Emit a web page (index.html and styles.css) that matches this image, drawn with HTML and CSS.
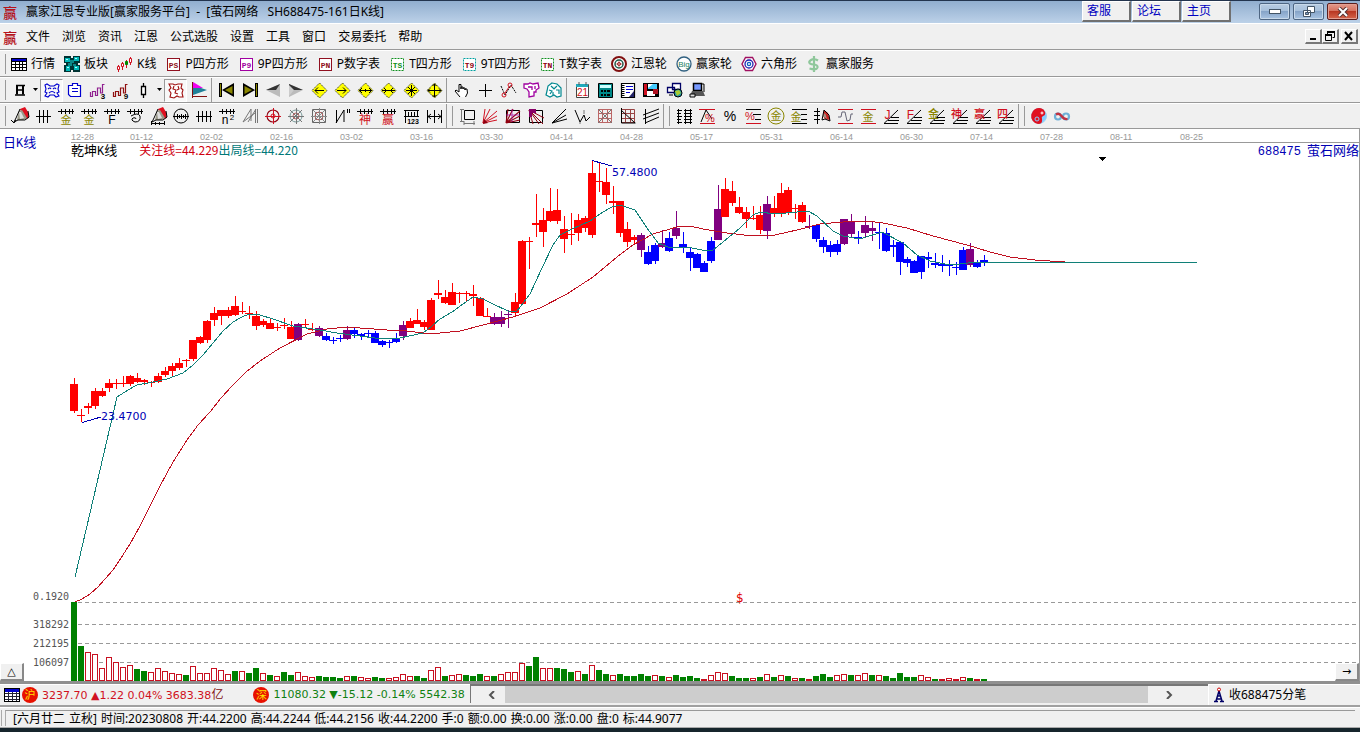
FILE: index.html
```html
<!DOCTYPE html>
<html lang="zh-CN">
<head>
<meta charset="utf-8">
<title>赢家江恩专业版</title>
<link rel="stylesheet" href="styles.css">
</head>
<body>
<div class="app">
  <header class="titlebar">
    <span class="logo">赢</span>
    <h1 class="title">赢家江恩专业版[赢家服务平台]&nbsp; - &nbsp;[萤石网络 &nbsp; SH688475-161日K线]</h1>
    <nav class="links"><button>客服</button><button>论坛</button><button>主页</button></nav>
    <div class="win">
      <button aria-label="最小化"><svg width="12" height="6"><rect x=".5" y=".5" width="11" height="4" fill="#fff" stroke="#456"/></svg></button>
      <button aria-label="还原"><svg width="12" height="12"><path d="M4.500.500h7v6h-7z M.500 4.500h7v6h-7z" fill="#fff" stroke="#456"/><path d="M2.500 6.500h3v2h-3z" fill="#7f9cc0" stroke="#456"/></svg></button>
      <button class="close" aria-label="关闭"><svg width="12" height="10"><path d="M2 1l8 8M10 1l-8 8" stroke="#533" stroke-width="4"/><path d="M2 1l8 8M10 1l-8 8" stroke="#fff" stroke-width="2"/></svg></button>
    </div>
  </header>
  <div class="menubar">
    <span class="logo">赢</span>
    <nav class="menu"><button>文件</button><button>浏览</button><button>资讯</button><button>江恩</button><button>公式选股</button><button>设置</button><button>工具</button><button>窗口</button><button>交易委托</button><button>帮助</button></nav>
    <div class="mdi">
      <button aria-label="最小化窗口"><svg width="12" height="10"><path d="M3 8h6" stroke="#000" stroke-width="2"/></svg></button>
      <button aria-label="还原窗口"><svg width="12" height="10"><path d="M3 1h8M1 4h7" stroke="#000" stroke-width="2"/><path d="M3.500 1v3M10.500 1v5.500h-2M1.500 4v5.500h6v-5.500" stroke="#000" fill="none"/></svg></button>
      <button class="apart" aria-label="关闭窗口"><svg width="12" height="10"><path d="M2 1l7 8M9 1l-7 8" stroke="#000" stroke-width="2"/></svg></button>
    </div>
  </div>
  <div class="toolbar" id="bar1"></div>
  <div class="toolbar" id="bar2"></div>
  <div class="toolbar" id="bar3"></div>
  <main class="chart">
    <svg class="plot" id="plot" role="img" aria-label="日K线"></svg>
    <span class="period">日<i>K</i>线</span>
    <div class="legend"><span>乾坤<i>K</i>线</span><span class="focus">关注线=44.229</span><span class="exit">出局线=44.220</span></div>
    <div class="stock"><i>688475</i><span>萤石网络</span></div>
    <button class="corner left">△</button>
    <button class="corner right">→</button>
  </main>
  <div class="ticker">
    <div class="quotes">
      <svg class="sheet" width="16" height="14"><rect x=".5" y=".5" width="15" height="13" fill="#fff" stroke="#000"/><path d="M1 2.500h14" stroke="#00c" stroke-width="3"/><path d="M1 5.500h14M1 8.500h14M1 11.500h14M4.500 4v9M8.500 4v9M12.500 4v9" stroke="#223"/></svg>
      <span class="badge">沪</span><span class="up">3237.70 ▲1.22 0.04% 3683.38<span class="unit">亿</span></span>
      <span class="badge second">深</span><span class="down">11080.32 ▼-15.12 -0.14% 5542.38</span>
    </div>
    <div class="scroll">
      <button class="prev" aria-label="向左"><svg width="8" height="8"><path d="M6 0L2 4l4 4" /></svg></button>
      <div class="thumb"></div>
      <button class="next" aria-label="向右"><svg width="8" height="8"><path d="M2 0l4 4-4 4" /></svg></button>
    </div>
    <div class="feed">
      <svg width="12" height="16"><path d="M6 4L3 14M6 4l3 10M4 9h4M4 12h4M1 14.500h4M7 14.500h4" stroke="#006" stroke-width="1.500" fill="none"/><circle cx="6" cy="2.500" r="1.500" fill="#fff" stroke="#c00"/></svg>
      <span>收688475分笔</span>
    </div>
  </div>
  <footer class="status"><div class="statusline"><span>[六月廿二</span><span>立秋]</span><span>时间:20230808</span><span>开:44.2200</span><span>高:44.2244</span><span>低:44.2156</span><span>收:44.2200</span><span>手:0</span><span>额:0.00</span><span>换:0.00</span><span>涨:0.00</span><span>盘:0</span><span>标:44.9077</span></div></footer>
  <div class="desk"></div>
</div>
<script src="app.js"></script>
</body>
</html>
```
FILE: styles.css
```css
* { box-sizing: border-box; }
body { margin: 0; font: 12px/16px "Noto Sans", "Noto Sans CJK SC", sans-serif; color: #000; background: #f0f0f0; }
button { font: inherit; color: inherit; background: none; border: 0; padding: 0; margin: 0; }
i { font-style: normal; }
svg { display: block; flex: none; }
.app { display: flex; flex-direction: column; height: 100vh; overflow: hidden; white-space: nowrap; }

.titlebar { display: flex; align-items: center; height: 23px; flex: none; padding: 0 2px 0 3px; border-top: 1px solid #23344e; background: linear-gradient(#91aecf, #bcd1e8); }
.logo { width: 16px; margin-right: 7px; font: 500 14px/18px "Noto Sans CJK SC", sans-serif; color: #b5121b; }
.title { margin: 0; font-size: 12px; font-weight: 400; flex: 1; }
.links { display: flex; gap: 1px; margin-right: 28px; align-self: flex-start; }
.links button { width: 49px; height: 21px; padding-left: 4px; text-align: left; color: #0000c0; background: #f0f0f0; border: 1px solid #fff; border-right: 2px solid #707070; border-bottom: 2px solid #707070; }
.win { display: flex; gap: 3px; align-self: flex-start; margin-top: 2px; }
.win button { width: 31px; height: 17px; display: grid; place-items: center; border: 1px solid #4e6683; border-radius: 2px; background: linear-gradient(#b8cce2, #a6bfdb 48%, #86a4c8 50%, #a9c4e2); box-shadow: inset 0 0 0 1px #c8d9ea; }
.win .close { background: linear-gradient(#e39a8c, #d5705d 48%, #b93823 50%, #d6664c); border-color: #5c1f1d; box-shadow: inset 0 0 0 1px #e3a093; }

.menubar { display: flex; align-items: center; height: 27px; flex: none; padding: 0 2px 0 3px; border-bottom: 1px solid #999; border-top: 1px solid #fff; }
.menu { display: flex; gap: 12px; flex: 1; }
.mdi { display: flex; }
.mdi button { width: 17px; height: 15px; display: grid; place-items: center; border: 1px solid #fff; border-right: 2px solid #777; border-bottom: 2px solid #777; }
.mdi .apart { margin-left: 2px; }

.toolbar { display: flex; flex: none; height: 26px; border-top: 1px solid #fff; border-bottom: 1px solid #999; }
#bar1 { height: 27px; }
.group { display: flex; align-items: center; padding-right: 1px; border-right: 1px solid #999; }
.group:last-child { border-right: 0; }
.grip { width: 1px; margin: 0 2px 0 5px; height: 20px; background: #999; }
.named { display: flex; align-items: center; gap: 4px; padding: 0 6px 0 3px; }
.tool { width: 23px; height: 23px; display: grid; place-items: center; }
.tool.on { border: 1px solid #999; border-right-color: #fff; border-bottom-color: #fff; background: #f8f8f8; }
.more { width: 9px; height: 20px; display: grid; place-items: center; }
.sep { width: 1px; height: 24px; margin: 0 3px 0 1px; background: #999; }

.chart { position: relative; flex: 1; min-height: 0; background: #fff; border-right: 1px solid #999; }
.plot { width: 100%; height: 100%; }
.plot text { white-space: pre; }
.date { font: 9px "Liberation Sans", sans-serif; fill: #999; }
.scale { font: 10px "DejaVu Sans Mono", monospace; fill: #555; }
.price { font: 11px "DejaVu Sans", sans-serif; fill: #0000b4; }
.dividend { font: 12px "DejaVu Sans", sans-serif; fill: #e00000; }
.period, .stock, .legend { position: absolute; font: 13px/16px "Noto Sans CJK SC", sans-serif; color: #0000b4; }
.period i, .stock i, .legend i { font: 12px "Liberation Mono", monospace; }
.period { left: 3px; top: 5px; }
.stock { right: 0; top: 13px; display: flex; gap: 6px; align-items: baseline; }
.legend { left: 71px; top: 13px; display: flex; color: #000; }
.focus, .exit { font-size: 12px; }
.focus { color: #d00010; margin-left: 22px; }
.exit { color: #007878; }
.corner { position: absolute; bottom: 0; width: 24px; height: 18px; background: #f0f0f0; border: 1px solid #fff; border-right: 2px solid #888; border-bottom: 2px solid #888; font: 11px/12px "DejaVu Sans", sans-serif; }
.corner.left { left: 0; }
.corner.right { right: 0; }

.ticker { display: flex; flex: none; height: 26px; border-top: 3px solid #909090; border-bottom: 2px solid #a0a0a0; font: 11px/18px "DejaVu Sans", "Noto Sans CJK SC", sans-serif; }
.quotes { flex: 0 0 470px; display: flex; align-items: center; overflow: hidden; padding-left: 4px; border-top: 1px solid #fff; }
.badge { flex: none; width: 16px; height: 16px; margin: 0 4px 0 2px; border-radius: 50%; background: #e81000; color: #ffe000; font: 11px/15px "Noto Sans CJK SC", sans-serif; text-align: center; }
.badge.second { margin-left: 24px; }
.up { color: #d01020; }
.unit { font-size: 12px; color: #801010; margin-right: 6px; }
.down { color: #108010; }
.scroll { flex: 1; display: flex; align-items: stretch; margin-bottom: 2px; border-top: 2px solid #777; border-left: 1px solid #777; }
.scroll button { display: flex; align-items: center; }
.scroll path { stroke: #555; stroke-width: 2; fill: none; }
.prev { width: 34px; padding-left: 17px; }
.next { width: 60px; padding-left: 17px; }
.thumb { flex: 1; background: #cdcdcd; }
.feed { flex: 0 0 152px; display: flex; align-items: center; gap: 4px; padding-left: 4px; border-left: 1px solid #fff; border-top: 1px solid #fff; font: 12px/18px "Noto Sans", "Noto Sans CJK SC", sans-serif; }
.status { flex: none; height: 21px; padding: 2px 5px 1px 5px; border-top: 1px solid #fff; border-bottom: 1px solid #aaa; }
.statusline { display: flex; gap: 4px; border-left: 1px solid #aaa; border-top: 1px solid #999; padding-left: 7px; line-height: 15px; box-shadow: -3px 0 0 #f0f0f0, -4px 0 0 #aaa; }
.desk { flex: none; height: 4px; background: #16252c; }
```
FILE: app.js
```js
const p = (d, stroke = '#000', fill = 'none', w = 1) => `<path d="${d}" stroke="${stroke}" fill="${fill}" stroke-width="${w}"/>`;
const f = (d, fill = '#000') => `<path d="${d}" fill="${fill}"/>`;
const c = (x, y, r, stroke = '#000', fill = 'none', w = 1) => `<circle cx="${x}" cy="${y}" r="${r}" stroke="${stroke}" fill="${fill}" stroke-width="${w}"/>`;
const t = (x, y, s, size, fill, weight = 400, face = 'Liberation Sans') => `<text x="${x}" y="${y}" font-size="${size}" fill="${fill}" font-weight="${weight}" text-anchor="middle" font-family="'${face}','Noto Sans CJK SC',sans-serif">${s}</text>`;
const svg = (body, size = 20) => `<svg width="${size}" height="${size}" viewBox="0 0 ${size} ${size}">${body}</svg>`;

const R = '#d01020', RD = '#900010', G = '#777', O = '#8a8600', B = '#0000d0', T = '#008890', M = '#a000a0';
const boxed = (s, color, dash = '', ink = color) => svg(`<rect x="2.500" y="2.500" width="12" height="12" fill="#fff" stroke="${color}" stroke-dasharray="${dash}"/>` + t(8.5, 11.5, s, 8, ink, 700, 'Liberation Mono'), 16);

const named = [
  ['行情', svg(f('M0 2h16v13H0z') + f('M1 3h14v2H1z', B) + f('M1 6h3v2H1zM5 6h3v2H5zM9 6h2v2H9zM12 6h3v2h-3zM1 9h3v2H1zM5 9h3v2H5zM9 9h2v2H9zM12 9h3v2h-3zM1 12h3v2H1zM5 12h3v2H5zM9 12h2v2H9zM12 12h3v2h-3z', '#fff'), 16)],
  ['板块', svg(f('M0 0h7v2h2V0h7v7h-2v2h2v7H9v-2H7v2H0V9h2V7H0z', '#033') + f('M1 2h5v4H1zM10 1h5v4h-5zM2 10h4v5H2zM10 10h5v4h-5z', '#00b8b8') + f('M6 4h4v3H6zM4 7h4v3H4zM9 8h3v2H9z', '#0a8888') + f('M2 3h2v1H2zM11 2h2v1h-2zM3 11h2v1H3zM11 11h2v1h-2z', '#aff'), 16)],
  ['K线', svg(p('M1.500 9v7M5.500 6v8M9.500 4v8M13.500 1v8', R) + p('M.5 10.500h2v3h-2zM4.500 7.500h2v3h-2zM12.500 2.500h2v4h-2z', R, '#fff') + p('M8.500 5.500h2v3h-2z', '#080', '#080'), 16)],
  ['P四方形', boxed('PS', '#901020')], ['9P四方形', boxed('P9', M)], ['P数字表', boxed('PN', '#901020')],
  ['T四方形', boxed('TS', '#109020', '2 1')], ['9T四方形', boxed('T9', '#00a0a0', '2 1', '#900010')], ['T数字表', boxed('TN', '#109020', '2 1', '#900010')],
  ['江恩轮', svg(c(8, 8, 7, '#801010', '#fff', 2) + c(8, 8, 4, '#186050', '#fff', 1.5) + c(8, 8, 1.5, '#a02020') + p('M8 4v8M4 8h8', '#a02020', 'none', .5), 16)],
  ['赢家轮', svg(c(8, 8, 7, '#306080', '#fff', 1.3) + t(8, 11, 'Big', 8, '#188060'), 16)],
  ['六角形', svg(p('M4.500 1.500h7L15 8l-3.500 6.500h-7L1 8z', '#a01060', '#fff', 1.4) + c(8, 8, 4, '#2020b0', 'none', 1.3) + c(8, 8, 1.6, '#1060c0', 'none', 1.3), 16)],
  ['赢家服务', svg(p('M12 4.500Q8 2 5 4t-1 3.500Q5 8.500 8 8.500q4 .500 3.500 3-1 3-8 1M8 0v16', '#8fc79b', 'none', 2.2), 16)]
];

const arrows = {
  left: 'M6 10.500h9M9 7.500l-3 3 3 3', right: 'M5 10.500h9M11 7.500l3 3-3 3', both: 'M4 10.500h13M7 8l-2.500 2.500L7 13M14 8l2.500 2.500L14 13M10.500 9v3',
  inward: 'M4 10.500h13M6 8l2.500 2.500L6 13M15 8l-2.500 2.500L15 13', star: 'M5 10.500h11M10.500 5v11M7 7l7 7M14 7l-7 7', cross: 'M4 10.500h13M10.500 4v13M8.500 6l2-2 2 2M8.500 15l2 2 2-2M6 8.500l-2 2 2 2M15 8.500l2 2-2 2'
};
const diamond = k => svg(f('M10.500 3l7.500 7.500-7.500 7.500L3 10.500z', '#ffff00') + '<path d="M10.500 3l7.500 7.500-7.500 7.500L3 10.500z" fill="none" stroke="#333" stroke-dasharray="1.500 1"/>' + p(arrows[k], '#000', 'none', 1));
const wave = (n, col) => svg(p('M2.500 12v4.500h2v-5h3v4h2V8h3v5h2V4.500h2', col, 'none', 1.2) + t(15, 19, n, 8, '#000', 700));

const bar2 = [
  ['日线', svg(p('M6 5.500h9M6 10h8', '#000', 'none', 1.5) + p('M7 5v9.500M13 5v9.500', '#000', 'none', 2) + p('M5 15h10', '#000', 'none', 1.5)), 'more'],
  ['云图', svg(p('M3 5l2-1 3 2h4l3-2 2 1-1 4 1 3-2 1 2 3-3 1-2-2H8l-2 2-3-1 2-3-2-1 1-3zM6 9q2-2 3 0M11 9q2-2 3 0M7 13q3-3 6 0', B, 'none', 1.1)), 'on'],
  ['剪贴板', svg(p('M7.500 3.500h5v2h3v11h-10l-2-2v-9h4zM7 8.500h6M7 11.500h6', B, '#fff', 1.2))],
  ['三波', wave('3', '#902090')], ['九波', wave('9', '#901010')],
  ['K线样式', svg(p('M7.500 6.500h4v8h-4zM9.500 3v3M9.500 15v3', '#000', '#fff', 1.3)), 'more'],
  ['形态', svg(p('M3 4h4l2 1 3-1h4l-1 4 2 2-1 3 1 4h-4l-2-1-3 2-4-1 1-4-2-3 2-2zM8 6l-1 3 3 1-1 3 3 1M12 6l1 3-2 1', '#a01010', '#fff', 1.1)), 'on'],
  ['旗', svg(p('M3.500 2v16M3 16.500h15', '#801010') + f('M4 2l10 6H4z', '#f000f0') + f('M4 8h8l6 2-14 5z', '#208098')), 'sep'],
  ['首', svg(f('M2 3h3v14H2zM17 3v14L5 10z') + f('M15.500 6v8L8 10z', '#8a8600') + f('M3 4h1v12H3z', '#8a8600'))],
  ['末', svg(f('M15 3h3v14h-3zM3 3v14l12-7z') + f('M4.500 6v8L12 10z', '#8a8600') + f('M16 4h1v12h-1z', '#8a8600'))],
  ['左', svg(f('M17 4v13L3 10z', '#bbb') + f('M17 4L3 10h10z', '#333'))],
  ['右', svg(f('M3 4v13l14-7z', '#bbb') + f('M3 4l14 6-14 0z', '#333') + f('M3 5l5 5-5 6z', '#ccc'))],
  ...Object.keys(arrows).map(k => [k, diamond(k)]),
  ['sep'],
  ['手形', svg(p('M8 17l-5-6 1-1 3 2V4.500h2V9V7h2v2-1h2v2-1h2l.500 4-2 4', '#000', '#fff'))],
  ['十字', svg(p('M10.500 4v13M4 10.500h13'))],
  ['节点', svg('<path d="M3 6l4 9L13 5l5 8" fill="none" stroke="#000" stroke-dasharray="2 1"/>' + c(6, 15, 2, R) + c(12, 5, 2, R) + p('M7 13l4-6', R))],
  ['脑图', svg(p('M3 4h4l2-1 3 1 5-1 1 5-3 2v2h-2v4l-5 1v-5l-2-3-3-1zM7 7h4v3M14 6v3', M, '#fff', 1.3))],
  ['云', svg(p('M8 3l5 1 4 4v8l-4 1-3-2-4 2-4-2 1-4 1-5zM7 6l3 3 3-3M5 10l3 1-2 3M12 10h3v4M9 12v4', T, '#fff', 1.2))],
  ['sep'],
  ['日历', svg(p('M4.500 4.500h12v13h-12z', '#444', '#fff') + f('M4 4h12v3H4z', '#2ab') + p('M7 2v3M14 2v3', '#555') + t(10.5, 16, '21', 10, R))],
  ['计算器', svg(p('M3.500 3.500h14v14h-14z', '#000', '#088', 1) + f('M5 5h11v3H5z', '#cff') + f('M6 10h2v2H6zM9 10h2v2H9zM12 10h3v2h-3zM6 14h2v2H6zM9 14h2v2H9zM12 14h3v2h-3z'))],
  ['笔记', svg(p('M3.500 3.500h13v14h-13z', '#000', '#fff', 1.2) + '<path d="M5 3v15" stroke="#000" stroke-width="3" stroke-dasharray="1 1"/>' + p('M8 6.500h7M8 9.500h7M8 12.500h4', B) + f('M16 11v6h-5z', '#226'))],
  ['保存', svg(f('M2 3h16v14H2z') + f('M3 4h3v11H3z', R) + f('M7 4h9v5H7z', '#4cf') + f('M7 4h5L7 8z', '#fff') + f('M6 11h8v5H6z', '#fff') + f('M12 9h5v5h-5z', '#b01020'))],
  ['联网', svg(p('M3.500 7.500h7v5h-7zM8.500 3.500h8v6h-8z', '#006', '#fff', 1.3) + c(14, 13, 4, '#000', '#29a') + f('M11 11l4-1 2 3-4 3z', '#ac3') + p('M5 15h4', '#000'))],
  ['电脑', svg(p('M6.500 3.500h8v7h-8z', '#000', '#79f', 1.5) + f('M5 11h11l2 5H3z', '#555') + p('M3 14h5v3H3zM15 4h2v8', '#000', '#ddd'))]
];

const comb = 'M2 5.500h16M5.500 3v5M9.500 3v5M13.500 3v5M16.500 3v5';
const combText = (s, col, size = 11) => svg(p(comb) + t(10, 18, s, size, col, 400));
const fan = (s, col) => svg(p('M3 17.500h14M7 14.500h11M10 11.500h8M3 17.500L17 4') + t(6.5, s > 'Z' ? 12 : 13, s, s > 'Z' ? 11 : 12, col, 500));
const rays = 'M3 17L5 3M3 17L10 3M3 17L17 5M3 17l14-7M3 17l14-3';
const pen = f('M10 3l5-2 3 5 1 6-5 1z', '#e01020') + f('M9 5l3-1 5 8-4 2-6 0z', '#998') + f('M9 6l2 0 3 6-4 1z', '#ddd') + p('M10 3L6 12l-2 4 4-2 7 0 4-3-1-6');
const grid = 'M3.500 3.500h13v13h-13zM7.500 3v14M12.500 3v14M3 7.500h14M3 12.500h14';

const bar3 = [[
  ['画笔', svg(pen + p('M1 14l3 3 2-3'))], ['分割', svg(p('M3 10.500h15M6.500 4v13M10.500 4v13M14.500 4v13'))],
  ['金一', combText('金', O)], ['金二', combText('金', O)], ['斐波', combText('F', '#000', 12)],
  ['螺旋', svg(p(comb) + p('M6 10q7-4 9 0 1 6-5 6-5-2-2-4 3-1 3 1'))],
  ['标尺笔', svg(pen + p('M3 17.500h14M3.500 15v4M7.500 16v3M11.500 16v3M16.500 15v4'))],
  ['圆尺', svg(c(10, 10, 7) + p('M2 10.500h16M6.500 8v5M8.500 9v3M10.500 8v5M12.500 9v3M14.500 8v5'))],
  ['等分', svg(p('M2 10.500h16M4.500 5v11M8.500 5v11M12.500 5v11M16.500 5v11'))],
  ['平方', svg(p(comb) + t(8, 18, 'n', 12, '#000') + t(15, 14, '2', 8, '#000'))],
  ['角线', svg(p('M3 16L11 3v12M3 16l12-9M15.500 3v14M17.500 3v14M8 16l8-13', G))],
  ['靶心', svg(c(10, 10, 6, RD, 'none', 1.1) + c(10, 10, 2, R) + p('M10.500 2v16M2 10.500h16', R))],
  ['辐射', svg(c(10, 10, 6, '#799') + c(10, 10, 3, '#b66') + p('M10.500 2v16M2 10.500h16M4 4l12 12M16 4L4 16', '#777'))],
  ['方格', svg(p('M3.500 3.500h13v13h-13zM6.500 6.500h7v7h-7z', '#666') + c(10, 10, 4, '#b66') + p('M10.500 2v16M2 10.500h16M3 3l14 14M17 3L3 17', '#888'))],
  ['折线', svg(p('M4.500 4v13M4 17L12 4v12M15.500 3v4M17.500 3v4'))],
  ['神', combText('神', R, 12)], ['赢', combText('赢', R, 12)],
  ['尺度', svg(p('M3 4.500h15M3 10.500h15M4.500 4v13M7.500 6v5M10.500 6v5M13.500 6v5M16.500 4v7') + t(12, 18, '123', 7, '#000', 700))],
  ['区间', svg(p('M3.500 4v13M17.500 4v13M10.500 4v13M4 10.500h13M7 8l-3 2.500L7 13M14 8l3 2.500-3 2.500'))]
], [
  ['矩形', svg(p('M7.500 4.500h10v9h-10z') + p('M3 3.500h4M3 15.500h4M4.500 3v13M7 17.500h11M7 15v4M17 15v4', G))],
  ['射线', svg(p(rays, R) + f('M3 18l1-5 4 4z', RD))],
  ['方扇', svg(p('M3.500 4.500h13v12h-13z') + p(rays, RD, 'none', 1.1) + p('M9 3v13M3 9h14', M, 'none', .7))],
  ['反扇', svg(p('M3.500 4.500h13v12h-13z') + p('M3 4l4 14M3 4l14 14M3 4l15 8M3 4l10 14', RD, 'none', 1) + f('M3 3h7v4H6v4H3z', '#806'))],
  ['速度线', svg(p('M3 17L17 3M3 17l14-8M3 17l15-4'))],
  ['波浪', svg(p('M3 4l5 12 4-7 2 6 4-4') + p('M12 4v4M8 16v2', G))],
  ['格栅', svg(p(grid, '#b66') + p('M3 3l14 14M17 3L3 17', G))],
  ['格栅二', svg(p(grid, '#944') + p('M3.500 2v15h14M3 4l14 13', '#000'))],
  ['平行线', svg(p('M4.500 3v15M2 9l16-6M2 13l16-6M4 17l14-6'))]
], [
  ['刻度', svg(p('M4.500 3v15M11.500 3v15M16.500 3v15') + p('M3 4.500h5M3 7.500h4M3 10.500h5M3 13.500h4M3 16.500h5M10 4.500h8M10 7.500h8M10 10.500h8M10 13.500h8M10 16.500h8'))],
  ['百分一', svg(p('M2 3.500h16M3 17.500h15', R) + p('M4 16L9 4l6 9') + t(13, 16, '%', 11, R))],
  ['百分', svg(t(10, 15, '%', 14, '#000'))],
  ['百分线', svg(p('M3 3.500h15M10 8.500h8M12 13.500h6') + p('M3 17.500h15', R) + t(7, 14, '%', 11, R))],
  ['金圆', svg(c(10, 10, 8, O) + t(10, 14, '金', 11, O))],
  ['金线', svg(p('M3 3.500h15M12 8.500h6M12 13.500h6M3 17.500h15') + t(7, 15, '金', 11, O))],
  ['标笔', svg(p('M5.500 2v16M2 5.500h6M2 9.500h6M2 13.500h6') + f('M12 4l4 3 2 7-5-1-2-3z', '#c22') + f('M11 10l2-3 2 6z', '#998') + p('M12 4l-2 10 3-1 5 2-1-6z'))],
  ['波带', svg(p('M3 3.500h15M3 17.500h15', R) + p('M3 11h3l1-5 3 0 2 9 3-1 1-6h2', '#667'))],
  ['金带', svg(p('M3 3.500h15M3 17.500h15', R) + t(10, 15, '金', 11, O))],
  ['J', fan('J', R)], ['F', fan('F', R)], ['金', fan('金', O)], ['神', fan('神', R)], ['赢', fan('赢', R)], ['四', fan('四', R)]
], [
  ['太极', svg(c(10, 10, 7.5, '#9cd4f4', '#8cf') + f('M12 2.300A8 8 0 1 0 9 18q5 0 4-5-1-2 1-3 3-1 2-4-1-3-4-3.700z', '#e01020') + c(8, 13, 2, '#8cf') + c(13, 7, 1, '#fff', '#e01020'))],
  ['无限', svg(c(6, 10.5, 3, '#6fb0d8', 'none', 2.2) + c(14, 10.5, 3, '#6fb0d8', 'none', 2.2) + p('M4 8.500q3-2 5.500 1.500t6 3', '#c23040', 'none', 2.2))]
]];

const more = '<button class="more" aria-label="展开"><svg width="6" height="4"><path d="M0 0h5L2.500 3z"/></svg></button>';
const tool = ([label, icon, extra]) => label === 'sep' ? '<span class="sep"></span>'
  : `<button class="tool${extra === 'on' ? ' on' : ''}" aria-label="${label}">${icon}</button>` + (extra === 'more' ? more : extra === 'sep' ? '<span class="sep"></span>' : '');
const group = html => `<div class="group"><span class="grip"></span>${html}</div>`;
document.getElementById('bar1').innerHTML = group(named.map(([s, i]) => `<button class="named">${i}<span>${s}</span></button>`).join(''));
document.getElementById('bar2').innerHTML = group(bar2.map(tool).join(''));
document.getElementById('bar3').innerHTML = bar3.map(g => group(g.map(tool).join(''))).join('');

// One candle per trading day: colour, high, body top, body bottom, low
const candles = `R378,384,411,413 R409,415,416,422 R403,406,408,414 R388,391,406,409 R388,391,396,397 R379,383,388,392 R379,383,384,389 R376,383,384,387
R375,376,384,386 R373,378,382,383 R379,380,382,385 R381,382,383,387 R373,376,382,383 R367,371,375,377 R363,366,371,376 R358,363,368,370
R359,360,361,367 R340,340,359,361 R336,337,343,344 R320,321,340,343 R307,313,320,326 R310,310,316,325 R307,310,316,318 R296,306,315,316
R302,311,312,314 R306,313,314,319 R311,316,326,330 R319,321,325,327 R318,323,329,329 R323,327,328,331 R318,325,326,329 R321,327,339,339
P323,324,340,341 R319,324,325,327 R323,329,330,331 P326,328,336,337 B333,336,340,341 B337,340,341,344 B335,338,339,342 P326,330,339,340
B328,330,334,338 B333,334,336,340 B330,333,334,338 B331,333,343,343 B340,341,345,347 B340,342,343,348 B333,338,342,343 P321,325,336,340
R318,321,328,328 R309,320,324,324 R320,322,327,330 R298,300,330,330 R280,293,295,299 R290,297,303,304 R283,292,305,305 R292,293,294,303
R291,293,294,302 R285,294,296,306 R297,298,316,316 R308,316,317,317 P313,317,324,325 P311,317,324,327 P310,314,315,328 R293,302,313,316
R240,241,304,305 R237,241,242,269 R194,223,225,237 R208,220,232,247 R188,211,221,222 R189,210,221,224 R216,229,239,253 R213,234,235,245
R214,220,233,241 R216,218,228,232 R160,173,235,238 R162,181,182,192 R168,182,195,204 R186,201,203,214 R201,201,233,237 R222,229,242,247
R235,237,240,244 P233,235,250,257 B246,252,264,265 B243,245,261,264 P230,243,247,248 B232,238,251,252 P211,228,236,239 B232,244,248,253
B248,252,258,271 B253,254,268,268 B261,263,272,272 B237,241,261,263 P185,209,240,240 R178,189,217,217 R181,191,203,206 R197,207,213,214
R207,212,219,228 R206,218,219,220 R206,215,230,234 P196,204,231,239 R196,208,213,217 R183,193,214,217 R187,190,213,215 R204,208,209,219
R202,205,222,223 P215,226,227,229 B225,225,239,242 B237,240,247,253 B241,245,252,257 B240,244,252,255 P219,219,244,245 P214,222,234,238
B231,237,239,244 P216,225,233,238 P221,228,231,241 B223,232,233,249 B228,233,251,252 B240,245,247,257 B241,242,262,275 B257,259,263,267
B260,261,273,273 B256,256,272,279 B252,257,259,268 B253,263,265,268 B255,264,266,272 B260,265,266,276 B262,267,268,275 B247,250,270,270
P243,249,265,267 B260,263,267,268 B255,260,262,266`.split(/\s+/);

// Volume bars: g filled, r hollow, followed by the bar height
const volumes = `g79 g35 r29 r27 r13 r24 r19 r14 r16 g12 g10 r9 r13 r10 r8 r7 g6 r15 r8 r8 r13 r11 r7 g10 r10 g8 g13 r8 g6 r5 g9 g6 r9 r5 r4 g5 g4 g4 g3 r5 g5 r4 r3 g4 g3
r3 r4 r7 r5 g5 g3 r11 r14 g5 r6 r7 g6 g5 g7 r5 g5 r7 r9 r9 r18 g15 g24 r13 r13 g13 g12 g9 r10 g7 r16 g11 g7 r6 g7 g5 g5 g7 g5 r6 g5 r4 g6 g4 g5 g3
r2 r6 r9 r8 g5 g3 g3 r3 g4 r7 g4 r6 g5 r3 g3 r2 g5 g7 g4 r6 r7 g6 r6 r8 g6 r6 g5 g3 g8 g4 g4 r6 r4 g2 r2 r3 r2 r4 g3 r2 g2`.split(/\s+/);

const exitLine = '75,577 90,513 117,397 128,390 137,385 153,382 167,379 183,373 193,365 203,355 213,343 223,331 233,322 242,317 249,314 260,315 273,319 293,326 320,330 337,333 360,336 375,338 400,338 423,333 432,326 440,319 452,312 463,304 473,297 483,299 493,304 508,311 517,311 530,294 542,268 553,245 560,235 572,229 590,221 603,212 612,207 620,205 635,210 647,228 658,243 668,247 687,247 707,251 713,250 723,242 740,228 753,215 760,212 775,214 808,211 817,216 833,231 843,236 860,239 882,232 903,243 917,255 930,261 945,264 960,264 977,262 1197,262';
const focusLine = '75,602 82,599 90,594 98,587 105,579 113,570 121,558 130,544 140,526 150,506 160,486 173,462 187,440 198,425 210,412 221,398 233,385 246,372 260,361 280,348 307,334 327,329 347,327 360,328 387,330 407,331 423,333 440,333 460,331 483,325 513,317 540,308 567,294 593,277 617,257 633,245 653,234 677,227 690,226 703,229 727,233 753,236 775,235 797,230 820,224 843,222 867,221 883,223 907,228 933,236 967,245 990,252 1010,257 1035,260 1065,262';
const dates = ['12-28', '01-12', '02-02', '02-16', '03-02', '03-16', '03-30', '04-14', '04-28', '05-17', '05-31', '06-14', '06-30', '07-14', '07-28', '08-11', '08-25'];

const TOP = 129, STEP = 7, BASE = 681;
const colors = { R: '#ff0000', P: '#800080', B: '#0000ff' };
let out = `<g transform="translate(0,${-TOP})" shape-rendering="crispEdges">`;
out += '<line x1="71" y1="142.500" x2="100%" y2="142.500" stroke="#999"/>';
dates.forEach((d, i) => { out += `<text class="date" x="${i ? 60 + 70 * i : 71}" y="140">${d}</text>`; });
for (const [y, s, ty] of [[602, '0.1920', 600], [624, '318292', 628], [643, '212195', 647], [662, '106097', 666]])
  out += `<line x1="71" y1="${y}.5" x2="100%" y2="${y}.5" stroke="#999" stroke-dasharray="4 3"/><text class="scale" x="69" y="${ty}" text-anchor="end">${s}</text>`;
volumes.forEach((v, i) => {
  const h = +v.slice(1), x = 71 + STEP * i;
  out += v[0] === 'g' ? `<rect x="${x}" y="${BASE - h}" width="6" height="${h}" fill="#008000"/>`
    : `<rect x="${x + .5}" y="${BASE - h + .5}" width="5" height="${h - 1}" fill="#fff" stroke="#c81020"/>`;
});
candles.forEach((k, i) => {
  const [hi, top, bottom, lo] = k.slice(1).split(',').map(Number), x = 70 + STEP * i;
  out += `<path fill="${colors[k[0]]}" d="M${x} ${top}h8V${bottom}h-8zM${x + 4} ${hi}h1V${lo}h-1z"/>`;
});
out += `<polyline points="${focusLine}" fill="none" stroke="#c01020"/><polyline points="${exitLine}" fill="none" stroke="#108078"/>`;
out += '<path d="M592 160.500L612 166M82 422.500L101 417" stroke="#0000b4"/><text class="price" x="612" y="176">57.4800</text><text class="price" x="101" y="420">23.4700</text>';
out += '<text class="dividend" x="736" y="602">$</text><path d="M1099 157h7l-3.500 4z"/></g>';
document.getElementById('plot').innerHTML = out;
```
